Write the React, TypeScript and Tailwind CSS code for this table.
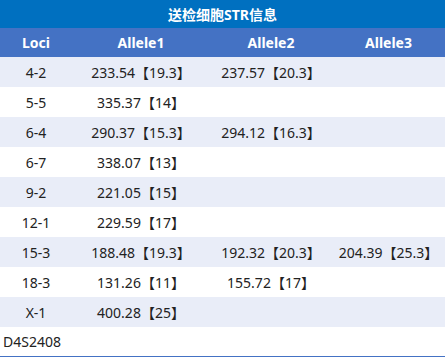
const rows: [string, string, string, string][] = [
	['4-2', '233.54【19.3】', '237.57【20.3】', ''],
	['5-5', '335.37【14】', '', ''],
	['6-4', '290.37【15.3】', '294.12【16.3】', ''],
	['6-7', '338.07【13】', '', ''],
	['9-2', '221.05【15】', '', ''],
	['12-1', '229.59【17】', '', ''],
	['15-3', '188.48【19.3】', '192.32【20.3】', '204.39【25.3】'],
	['18-3', '131.26【11】', '155.72【17】', ''],
	['X-1', '400.28【25】', '', '']
];

const App = () => (
	<div
		className="w-[445px] h-[357px] bg-white text-[14px] text-[#222]"
		style={{ fontFamily: '"Noto Sans", "Noto Sans CJK SC", sans-serif' }}
	>
		<div className="h-[28px] bg-[#0070c0] text-white font-bold flex items-center justify-center">
			送检细胞STR信息
		</div>
		<table className="w-full border-collapse table-fixed">
			<colgroup>
				<col className="w-[72px]" />
				<col className="w-[138px]" />
				<col className="w-[122px]" />
				<col />
			</colgroup>
			<thead>
				<tr className="h-[29px] bg-[#4472c4] text-white font-bold">
					<th className="text-center font-bold">Loci</th>
					<th className="text-center font-bold">Allele1</th>
					<th className="text-center font-bold">Allele2</th>
					<th className="text-center font-bold">Allele3</th>
				</tr>
			</thead>
			<tbody>
				{rows.map((row, index) => (
					<tr
						key={row[0]}
						className={`h-[30px] ${index % 2 === 0 ? 'bg-[#e9edf8]' : 'bg-white'}`}
					>
						{row.map((cell, i) => (
							<td key={i} className="text-center whitespace-nowrap p-0">
								{cell}
							</td>
						))}
					</tr>
				))}
				<tr className="h-[30px] border-b-2 border-[#4472c4]">
					<td colSpan={4} className="text-left pl-[3px]">
						D4S2408
					</td>
				</tr>
			</tbody>
		</table>
	</div>
);

export default App;
